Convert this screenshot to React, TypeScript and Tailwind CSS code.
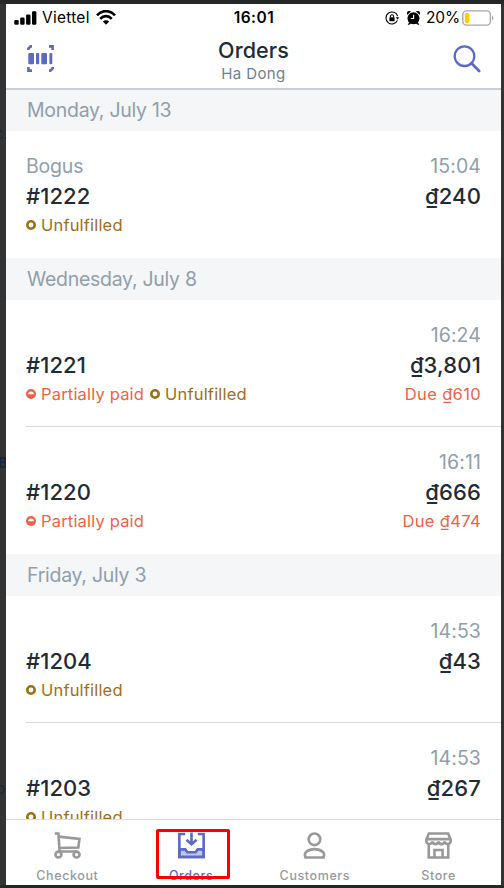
import React from 'react';

type Status = 'partial' | 'unfulfilled';

interface Order {
  id: string;
  customer?: string;
  time: string;
  total: string;
  due?: string;
  statuses: Status[];
}

const groups: { date: string; orders: Order[] }[] = [
  {
    date: 'Monday, July 13',
    orders: [{ id: '#1222', customer: 'Bogus', time: '15:04', total: '₫240', statuses: ['unfulfilled'] }],
  },
  {
    date: 'Wednesday, July 8',
    orders: [
      { id: '#1221', time: '16:24', total: '₫3,801', due: 'Due ₫610', statuses: ['partial', 'unfulfilled'] },
      { id: '#1220', time: '16:11', total: '₫666', due: 'Due ₫474', statuses: ['partial'] },
    ],
  },
  {
    date: 'Friday, July 3',
    orders: [
      { id: '#1204', time: '14:53', total: '₫43', statuses: ['unfulfilled'] },
      { id: '#1203', time: '14:53', total: '₫267', statuses: ['unfulfilled'] },
    ],
  },
];

function StatusBar() {
  return (
    <div className="grid h-[27px] grid-cols-[1fr_auto_1fr] items-center pl-2 pr-[7px] text-black">
      <div className="flex items-center">
        <svg width="23" height="14" viewBox="0 0 23 14" fill="currentColor">
          <rect x="0.3" y="9" width="4.4" height="4.8" rx="1.2" />
          <rect x="6.2" y="6.5" width="4.4" height="7.3" rx="1.2" />
          <rect x="12.1" y="3.5" width="4.4" height="10.3" rx="1.2" />
          <rect x="18" y="0.2" width="4.4" height="13.6" rx="1.2" />
        </svg>
        <span className="mt-px ml-[5px] text-[15.5px] tracking-[0.25px]">Viettel</span>
        <svg className="ml-[6px]" width="20" height="15" viewBox="0 0 20 15" fill="none" stroke="currentColor">
          <path d="M1 5.4C6.2-.2 13.8-.2 19 5.4" strokeWidth="2.8" />
          <path d="M4.2 8.8c3.4-3.6 8.2-3.6 11.6 0" strokeWidth="2.6" />
          <path d="M6.9 11.6c1.7-1.9 4.5-1.9 6.2 0L10 14.8z" fill="currentColor" stroke="none" />
        </svg>
      </div>
      <span className="mt-px text-[15.5px] font-semibold tracking-[0.5px]">16:01</span>
      <div className="flex items-center justify-end">
        <svg width="14" height="14" viewBox="0 0 14 14" fill="none" stroke="currentColor">
          <path d="M12.7 5.1A6 6 0 1 0 12.5 9.4" strokeWidth="1.1" />
          <path d="M10.8 6.2h3.2l-1.5 2.6z" fill="currentColor" stroke="none" />
          <rect x="4.4" y="6.3" width="5.2" height="3.9" rx="0.6" fill="currentColor" stroke="none" />
          <path d="M5.4 6.5V5.4a1.6 1.6 0 0 1 3.2 0v1.1" strokeWidth="1.1" />
        </svg>
        <svg className="ml-2" width="13" height="14" viewBox="0 0 13 14" fill="currentColor">
          <circle cx="6.5" cy="7.2" r="6" />
          <path d="M.3 3.4A2.2 2.2 0 0 1 3.6.6zM12.7 3.4A2.2 2.2 0 0 0 9.4.6zM1.2 13.8l1.4-3 1.8 1.4zM11.8 13.8l-1.4-3-1.8 1.4z" stroke="currentColor" strokeWidth="0.6" />
          <path d="M6.6 3.8v3.7H3.8" fill="none" stroke="#fff" strokeWidth="1.1" />
        </svg>
        <span className="mt-px ml-[6px] text-[15.5px] tracking-[-0.15px]">20%</span>
        <svg className="ml-[2px]" width="32" height="16" viewBox="0 0 32 16">
          <rect x="0.8" y="0.9" width="27.6" height="14.2" rx="3.6" fill="#fff" stroke="#a8a8a8" strokeWidth="1.4" />
          <rect x="2.8" y="2.9" width="4.6" height="10.2" rx="1.8" fill="#ffcc00" />
          <path d="M30 5.6c1.8.5 1.8 4.3 0 4.8z" fill="#a8a8a8" />
        </svg>
      </div>
    </div>
  );
}

function Header() {
  return (
    <header className="flex h-[59px] items-start justify-between border-b-2 border-[#c9ced6] pl-[21px] pr-[20px]">
      <svg className="mt-[14px]" width="27" height="27" viewBox="0 0 27 27" fill="#5c6ac4">
        <path d="M1.4 5V3.6L3.6 1.4H5M22 1.4h3.6V5M25.6 22v1.4l-2.2 2.2H22M5 25.6H1.4V22" fill="none" stroke="#5c6ac4" strokeWidth="2.6" />
        <rect x="1.3" y="8" width="5.7" height="11.2" rx="1" />
        <rect x="9" y="8" width="3.2" height="11.2" rx="1" />
        <rect x="14.3" y="8" width="5.7" height="11.2" rx="1" />
        <rect x="22.4" y="8" width="2.9" height="11.2" rx="1" />
      </svg>
      <div className="mt-[6px] text-center">
        <h1 className="mb-px text-[21.5px] leading-[26px] font-medium tracking-[0.1px] text-[#212b36]">Orders</h1>
        <p className="text-[15px] leading-[20px] tracking-[0.4px] text-[#6f8190]">Ha Dong</p>
      </div>
      <svg className="mt-[14px]" width="28" height="28" viewBox="0 0 28 28" fill="none" stroke="#5c6ac4" strokeWidth="2.3">
        <circle cx="11.5" cy="11.2" r="9.8" />
        <path d="M18.5 18.3l7.6 7.6" strokeWidth="2.8" strokeLinecap="round" />
      </svg>
    </header>
  );
}

function StatusLabel({ status }: { status: Status }) {
  if (status === 'partial') {
    return (
      <span className="flex items-center gap-[5px] text-[#ed6347]">
        <svg width="10" height="10" viewBox="0 0 10 10">
          <circle cx="5" cy="5" r="5" fill="#ed6347" />
          <path d="M2.2 5.2a2.8 2.8 0 0 1 5.6 0z" fill="#fff" />
        </svg>
        Partially paid
      </span>
    );
  }
  return (
    <span className="flex items-center gap-[5px] text-[#9c6f19]">
      <svg width="10" height="10" viewBox="0 0 10 10">
        <circle cx="5" cy="5" r="3.7" fill="none" stroke="#9c6f19" strokeWidth="2.6" />
      </svg>
      Unfulfilled
    </span>
  );
}

function OrderRow({ order, divider }: { order: Order; divider: boolean }) {
  return (
    <div className="h-[127px] shrink-0 pl-[20px]">
      <div className={`flex h-full flex-col pt-[21px] pr-[20px] ${divider ? 'border-b border-[#d5dae0]' : ''}`}>
        <div className="flex h-[30px] items-center justify-between text-[19.5px] text-[#919eab]">
          <span className="tracking-[-0.2px]">{order.customer}</span>
          <span className="tracking-[0.1px]">{order.time}</span>
        </div>
        <div className="flex h-[28px] items-center justify-between text-[22px] font-medium text-[#212b36]">
          <span className="tracking-[0.1px]">{order.id}</span>
          <span className="tracking-[0.15px]">{order.total}</span>
        </div>
        <div className="flex h-[30px] items-center justify-between text-[16.5px]">
          <div className="flex gap-[6px] tracking-[0.18px]">
            {order.statuses.map((s) => (
              <StatusLabel key={s} status={s} />
            ))}
          </div>
          <span className="tracking-[0.35px] text-[#ed6347]">{order.due}</span>
        </div>
      </div>
    </div>
  );
}

const tabs = [
  {
    label: 'Checkout',
    icon: (
      <>
        <path d="M.8 1.5h3.8l1.2 18.7h18" />
        <path d="M5 4.8l21.4 2.3-1.2 9L5.6 16.6" />
        <circle cx="4.6" cy="23.4" r="3.1" />
        <circle cx="23.4" cy="23.4" r="3.1" />
      </>
    ),
  },
  {
    label: 'Orders',
    icon: (
      <>
        <path d="M1.4 18h6.2l2.2 3h8.4l2.2-3h6.2v8H1.4z" fill="#bfc5e8" />
        <path d="M7.5 2.1H1.4V26h25.2V2.1h-6.1" />
        <path d="M14 .5v12M8.8 8l5.2 4.8L19.2 8" />
      </>
    ),
  },
  {
    label: 'Customers',
    icon: (
      <>
        <circle cx="14" cy="7.6" r="6" />
        <path d="M4.6 26.4c-1.1-3.2-.9-4.4.6-5.6 4.6-4 13-4 17.6 0 1.5 1.2 1.7 2.4.6 5.6z" />
      </>
    ),
  },
  {
    label: 'Store',
    icon: (
      <>
        <path d="M4 1.6h20l2.6 6.2v1.7a3.2 3.2 0 0 1-6.3.4 3.2 3.2 0 0 1-6.3 0 3.2 3.2 0 0 1-6.3 0 3.2 3.2 0 0 1-6.3-.4V7.8zM1.4 7.4h25.2" />
        <path d="M3.9 12.5v13.9h20.2V12.5M9.8 26v-7.4h8.4V26" />
      </>
    ),
  },
];

function TabBar() {
  return (
    <nav className="relative grid h-[66px] shrink-0 grid-cols-4 overflow-hidden border-t border-[#dcdcdc] bg-white">
      {tabs.map((tab) => (
        <div
          key={tab.label}
          className={`flex flex-col items-center pt-[12px] pr-px ${tab.label === 'Orders' ? 'text-[#5c6ac4]' : 'text-[#999999]'}`}
        >
          <svg width="27" height="27" viewBox="0 0 28 28" fill="none" stroke="currentColor" strokeWidth="2.7">
            {tab.icon}
          </svg>
          <span className="mt-[8px] text-[12.5px] leading-[17px] font-medium tracking-[0.6px]">{tab.label}</span>
        </div>
      ))}
      {/* callout around the active tab; bottom edge cuts through its label */}
      <div className="absolute top-[9px] left-[150px] h-[50px] w-[74px] rounded-[2px] border-[3px] border-[#fe0000]" />
    </nav>
  );
}

export default function App() {
  return (
    <div
      className="flex h-[888px] w-[504px] overflow-hidden border-t-4 border-b-[3px] border-[#262727] bg-[#333333]"
      style={{ fontFamily: 'Inter, "Liberation Sans", sans-serif' }}
    >
      {/* page behind the phone, only a sliver is visible */}
      <aside className="flex w-[6px] shrink-0 flex-col overflow-hidden text-[15px] leading-[20px] whitespace-nowrap text-[#13273a]">
        <span className="-ml-[5px] mt-[120px]">c.</span>
        <span className="-ml-[2px] mt-[309px] text-[14px] font-semibold">B</span>
        <span className="-ml-[4px] mt-[306px]">o</span>
      </aside>
      <div className="flex w-[495px] flex-col overflow-hidden bg-white">
        <StatusBar />
        <Header />
        <main className="flex min-h-0 flex-1 flex-col overflow-hidden">
          {groups.map((group, g) => (
            <React.Fragment key={group.date}>
              <div
                className={`flex shrink-0 items-center bg-[#f4f6f8] pt-px pl-[21px] text-[19.5px] tracking-[-0.28px] text-[#919eab] ${g === 0 ? 'h-[41px]' : 'h-[42px]'}`}
              >
                {group.date}
              </div>
              {group.orders.map((order, i) => (
                <OrderRow key={order.id} order={order} divider={i < group.orders.length - 1} />
              ))}
            </React.Fragment>
          ))}
        </main>
        <TabBar />
      </div>
    </div>
  );
}
